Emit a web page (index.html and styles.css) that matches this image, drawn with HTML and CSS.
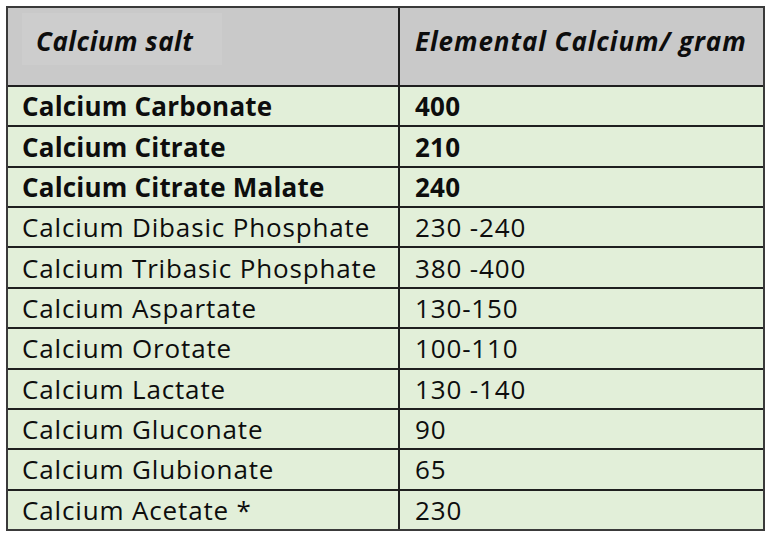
FILE: index.html
```html
<!DOCTYPE html>
<html lang="en">
<head>
<meta charset="utf-8">
<title>Calcium salts</title>
<link rel="stylesheet" href="styles.css">
</head>
<body>
<div class="wrap">
  <div class="table">
    <div class="cell head"><span class="patch">Calcium salt</span></div>
    <div class="cell head col2"><span class="htext">Elemental Calcium/ gram</span></div>

    <div class="cell bold">Calcium Carbonate</div><div class="cell bold col2">400</div>
    <div class="cell bold">Calcium Citrate</div><div class="cell bold col2">210</div>
    <div class="cell bold">Calcium Citrate Malate</div><div class="cell bold col2">240</div>
    <div class="cell">Calcium Dibasic Phosphate</div><div class="cell col2">230 -240</div>
    <div class="cell">Calcium Tribasic Phosphate</div><div class="cell col2">380 -400</div>
    <div class="cell">Calcium Aspartate</div><div class="cell col2">130-150</div>
    <div class="cell">Calcium Orotate</div><div class="cell col2">100-110</div>
    <div class="cell">Calcium Lactate</div><div class="cell col2">130 -140</div>
    <div class="cell">Calcium Gluconate</div><div class="cell col2">90</div>
    <div class="cell">Calcium Glubionate</div><div class="cell col2">65</div>
    <div class="cell">Calcium Acetate *</div><div class="cell col2">230</div>
  </div>
</div>
</body>
</html>
```
FILE: styles.css
```css
html, body {
  margin: 0;
  padding: 0;
  background: #ffffff;
}
body {
  font-family: "Open Sans", "DejaVu Sans", sans-serif;
  color: #0d0d0d;
}
.wrap {
  padding: 6px 0 0 6px;
}
.table {
  box-sizing: border-box;
  width: 759px;
  height: 525px;
  display: grid;
  grid-template-columns: 390px 1fr;
  grid-template-rows: 77px repeat(11, 1fr);
  gap: 2px;
  background: #1f1f1f;
  border: 2px solid #3a3a3a;
}
.cell {
  background: #e2efd9;
  display: flex;
  align-items: center;
  padding-left: 14px;
  font-size: 26px;
  line-height: 1;
  letter-spacing: 0.85px;
  white-space: nowrap;
}
.cell.col2 {
  padding-left: 15px;
}
.bold {
  font-weight: 700;
  letter-spacing: 0.2px;
}
.head {
  background: #c9c9c9;
  font-weight: 700;
  font-style: italic;
  align-items: flex-start;
  padding-top: 20px;
}
.patch {
  box-sizing: border-box;
  display: block;
  width: 200px;
  height: 52px;
  background: #cdcdcd;
  margin: -15px 0 0 0;
  padding: 15px 0 0 14px;
  letter-spacing: 0.5px;
}
.htext {
  letter-spacing: 0.9px;
}
```
